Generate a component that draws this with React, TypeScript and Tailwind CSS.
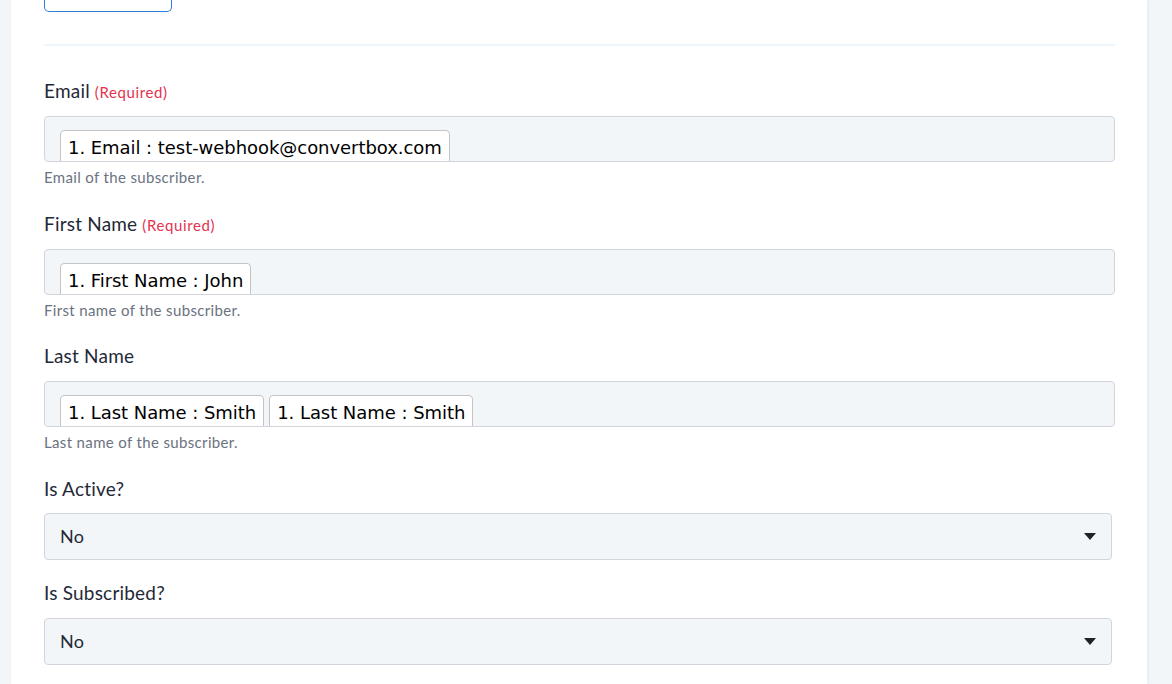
import React from "react";

type TokenField = {
  label: string;
  required?: boolean;
  tokens: string[];
  help: string;
};

const tokenFields: TokenField[] = [
  {
    label: "Email",
    required: true,
    tokens: ["1. Email : test-webhook@convertbox.com"],
    help: "Email of the subscriber.",
  },
  {
    label: "First Name",
    required: true,
    tokens: ["1. First Name : John"],
    help: "First name of the subscriber.",
  },
  {
    label: "Last Name",
    tokens: ["1. Last Name : Smith", "1. Last Name : Smith"],
    help: "Last name of the subscriber.",
  },
];

const selectFields = [
  { label: "Is Active?", value: "No" },
  { label: "Is Subscribed?", value: "No" },
];

function Label({ text, required }: { text: string; required?: boolean }) {
  return (
    <div className="h-[22px] flex items-baseline text-[19px] leading-[22px] tracking-[0.2px] text-[#1f2937]">
      <span>{text}</span>
      {required && (
        <span className="ml-[5px] text-[15px] tracking-[0.6px] text-[#e3334f]">(Required)</span>
      )}
    </div>
  );
}

function TokenInput({ field }: { field: TokenField }) {
  return (
    <div className="flex flex-col">
      <Label text={field.label} required={field.required} />
      <div className="mt-[14px] h-[46px] overflow-hidden rounded-[4px] border border-[#d2d6dc] bg-[#f3f6f9] pl-[15px] pt-[13px]">
        <div className="flex gap-[5px]">
          {field.tokens.map((t, i) => (
            <span
              key={i}
              className="h-[40px] rounded-[4px] border border-[#c4c4c4] bg-white px-[7px] pt-[5px] text-[18px] leading-[24px] tracking-[-0.05px] text-black [font-family:'DejaVu_Sans',sans-serif]"
            >
              {t}
            </span>
          ))}
        </div>
      </div>
      <div className="mt-[6px] text-[15px] leading-[18px] tracking-[0.35px] text-[#6b7280]">
        {field.help}
      </div>
    </div>
  );
}

function SelectInput({ label, value, gap }: { label: string; value: string; gap: string }) {
  return (
    <div className="flex flex-col pr-[3px]">
      <Label text={label} />
      <div className={`${gap} h-[47px] flex items-center justify-between rounded-[4px] border border-[#d2d6dc] bg-[#f3f6f9] pl-[15px] pr-[15px]`}>
        <span className="text-[18px] tracking-[0.3px] text-[#1f2937]">{value}</span>
        <svg width="12" height="7" viewBox="0 0 12 7">
          <path d="M0 0h12L6 7z" fill="#222" />
        </svg>
      </div>
    </div>
  );
}

export default function App() {
  return (
    <div className="h-[684px] w-[1172px] overflow-hidden bg-[#f3f6f9] [font-family:'Lato',sans-serif]">
      <div className="ml-[11px] h-full w-[1136px] bg-white pl-[33px] pr-[32px] shadow-[1px_0_3px_rgba(0,0,0,0.06)]">
        {/* bottom edge of the button above */}
        <div className="h-[12px] w-[128px] rounded-b-[5px] border border-t-0 border-[#2b7fd6]" />
        <div className="mt-[32px] h-[2px] w-full bg-[#eef6fd]" />
        <div className="mt-[34px] flex flex-col gap-[26.5px]">
          {tokenFields.map((f) => (
            <TokenInput key={f.label} field={f} />
          ))}
        </div>
        <div className="mt-[26.5px] flex flex-col gap-[22px]">
          <SelectInput label={selectFields[0].label} value={selectFields[0].value} gap="mt-[13px]" />
          <SelectInput label={selectFields[1].label} value={selectFields[1].value} gap="mt-[14px]" />
        </div>
      </div>
    </div>
  );
}
